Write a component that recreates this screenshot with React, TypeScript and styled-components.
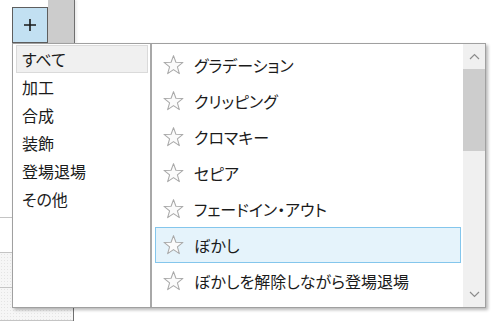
import React from "react";
import styled, { createGlobalStyle, css } from "styled-components";

const GlobalStyle = createGlobalStyle`
  html, body {
    margin: 0;
    padding: 0;
    background: #ffffff;
  }
  body {
    width: 500px;
    height: 321px;
    overflow: hidden;
    font-family: "Noto Sans CJK JP", "Noto Sans", sans-serif;
  }
`;

const Page = styled.div`
  position: relative;
  width: 500px;
  height: 321px;
  display: flex;
  flex-direction: column;
  background: #ffffff;
`;

const TopBar = styled.div`
  display: flex;
  align-items: flex-start;
  height: 43px;
  flex-shrink: 0;
`;

const AddButton = styled.div`
  box-sizing: border-box;
  margin: 7px 0 0 12px;
  width: 36px;
  height: 36px;
  display: flex;
  align-items: center;
  justify-content: center;
  background: #c2e0f2;
  border: 1px solid #5e5e5e;
`;

const GrayStrip = styled.div`
  box-sizing: border-box;
  width: 27px;
  height: 43px;
  background: #cccccc;
  border-right: 1px solid #6f6f6f;
  box-shadow: 2px 0 2px rgba(0, 0, 0, 0.08);
`;

const Body = styled.div`
  flex: 1;
  display: flex;
`;

const SideColumn = styled.div`
  box-sizing: border-box;
  width: 74px;
  display: flex;
  flex-direction: column;
  border-right: 1px solid #707070;
`;

const SideCell = styled.div<{ $h?: number; $dotted?: boolean }>`
  box-sizing: border-box;
  ${(p) => (p.$h ? `height: ${p.$h}px;` : "flex: 1;")}
  border-bottom: 1px solid #c4c4c4;
  background: #ffffff;
  ${(p) =>
    p.$dotted &&
    css`
      background-color: #f6f6f6;
      background-image: radial-gradient(#e4e4e4 0.6px, transparent 0.6px);
      background-size: 3px 3px;
    `}
`;

const Popup = styled.div`
  position: absolute;
  left: 12px;
  top: 43px;
  width: 474px;
  height: 265px;
  box-sizing: border-box;
  border: 1px solid #a0a0a0;
  background: #ffffff;
  box-shadow: 2px 2px 3px rgba(0, 0, 0, 0.28);
  display: flex;
`;

const CategoryPane = styled.div`
  box-sizing: border-box;
  width: 139px;
  flex-shrink: 0;
  padding: 1px 2px 0 3px;
  border-right: 2px solid #a8a8a8;
`;

const CategoryItem = styled.div<{ $selected?: boolean }>`
  box-sizing: border-box;
  height: 28px;
  line-height: 26px;
  padding-left: 5px;
  font-size: 16px;
  color: #1b1b1b;
  font-feature-settings: "palt";
  border: 1px solid ${(p) => (p.$selected ? "#dadada" : "transparent")};
  background: ${(p) => (p.$selected ? "#f0f0f0" : "transparent")};
`;

const EffectPane = styled.div`
  flex: 1;
  display: flex;
`;

const EffectList = styled.div`
  flex: 1;
  padding: 3px 2px 0 3px;
`;

const EffectRow = styled.div<{ $selected?: boolean }>`
  box-sizing: border-box;
  height: 36px;
  display: flex;
  align-items: center;
  gap: 10px;
  padding-left: 7px;
  font-size: 16px;
  color: #1b1b1b;
  font-feature-settings: "palt";
  white-space: nowrap;
  border: 1px solid ${(p) => (p.$selected ? "#84c6ec" : "transparent")};
  background: ${(p) => (p.$selected ? "#e5f3fb" : "transparent")};
`;

const ScrollBar = styled.div`
  width: 22px;
  flex-shrink: 0;
  display: flex;
  flex-direction: column;
  background: #f0f0f0;
`;

const ScrollArrow = styled.div`
  height: 25px;
  display: flex;
  align-items: center;
  justify-content: center;
`;

const ScrollThumb = styled.div`
  height: 82px;
  background: #cdcdcd;
`;

const ScrollTrack = styled.div`
  flex: 1;
`;

const Star = () => (
  <svg width="21" height="20" viewBox="0 0 20 19">
    <polygon
      points="10,0.6 12.29,6.84 19.03,7.06 13.71,11.21 15.58,17.69 10,13.9 4.42,17.69 6.29,11.21 0.97,7.06 7.71,6.84"
      fill="#fbfbfb"
      stroke="#a9a9a9"
      strokeWidth="1"
      strokeLinejoin="round"
    />
  </svg>
);

const Plus = () => (
  <svg width="14" height="14" viewBox="0 0 14 14">
    <path d="M7 1 V13 M1 7 H13" stroke="#1a1a1a" strokeWidth="1.6" />
  </svg>
);

const Chevron: React.FC<{ up?: boolean }> = ({ up }) => (
  <svg width="11" height="7" viewBox="0 0 11 7">
    <polyline
      points={up ? "1,6 5.5,1.5 10,6" : "1,1 5.5,5.5 10,1"}
      fill="none"
      stroke="#8c8c8c"
      strokeWidth="1.2"
    />
  </svg>
);

const categories = ["すべて", "加工", "合成", "装飾", "登場退場", "その他"];

const effects = [
  "グラデーション",
  "クリッピング",
  "クロマキー",
  "セピア",
  "フェードイン・アウト",
  "ぼかし",
  "ぼかしを解除しながら登場退場",
];

export default function App() {
  return (
    <>
      <GlobalStyle />
      <Page>
        <TopBar>
          <AddButton>
            <Plus />
          </AddButton>
          <GrayStrip />
        </TopBar>
        <Body>
          <SideColumn>
            <SideCell $h={175} />
            <SideCell $h={35} />
            <SideCell $h={35} $dotted />
            <SideCell $dotted />
          </SideColumn>
        </Body>
        <Popup>
          <CategoryPane>
            {categories.map((c, i) => (
              <CategoryItem key={c} $selected={i === 0}>
                {c}
              </CategoryItem>
            ))}
          </CategoryPane>
          <EffectPane>
            <EffectList>
              {effects.map((e) => (
                <EffectRow key={e} $selected={e === "ぼかし"}>
                  <Star />
                  {e}
                </EffectRow>
              ))}
            </EffectList>
            <ScrollBar>
              <ScrollArrow>
                <Chevron up />
              </ScrollArrow>
              <ScrollThumb />
              <ScrollTrack />
              <ScrollArrow>
                <Chevron />
              </ScrollArrow>
            </ScrollBar>
          </EffectPane>
        </Popup>
      </Page>
    </>
  );
}
